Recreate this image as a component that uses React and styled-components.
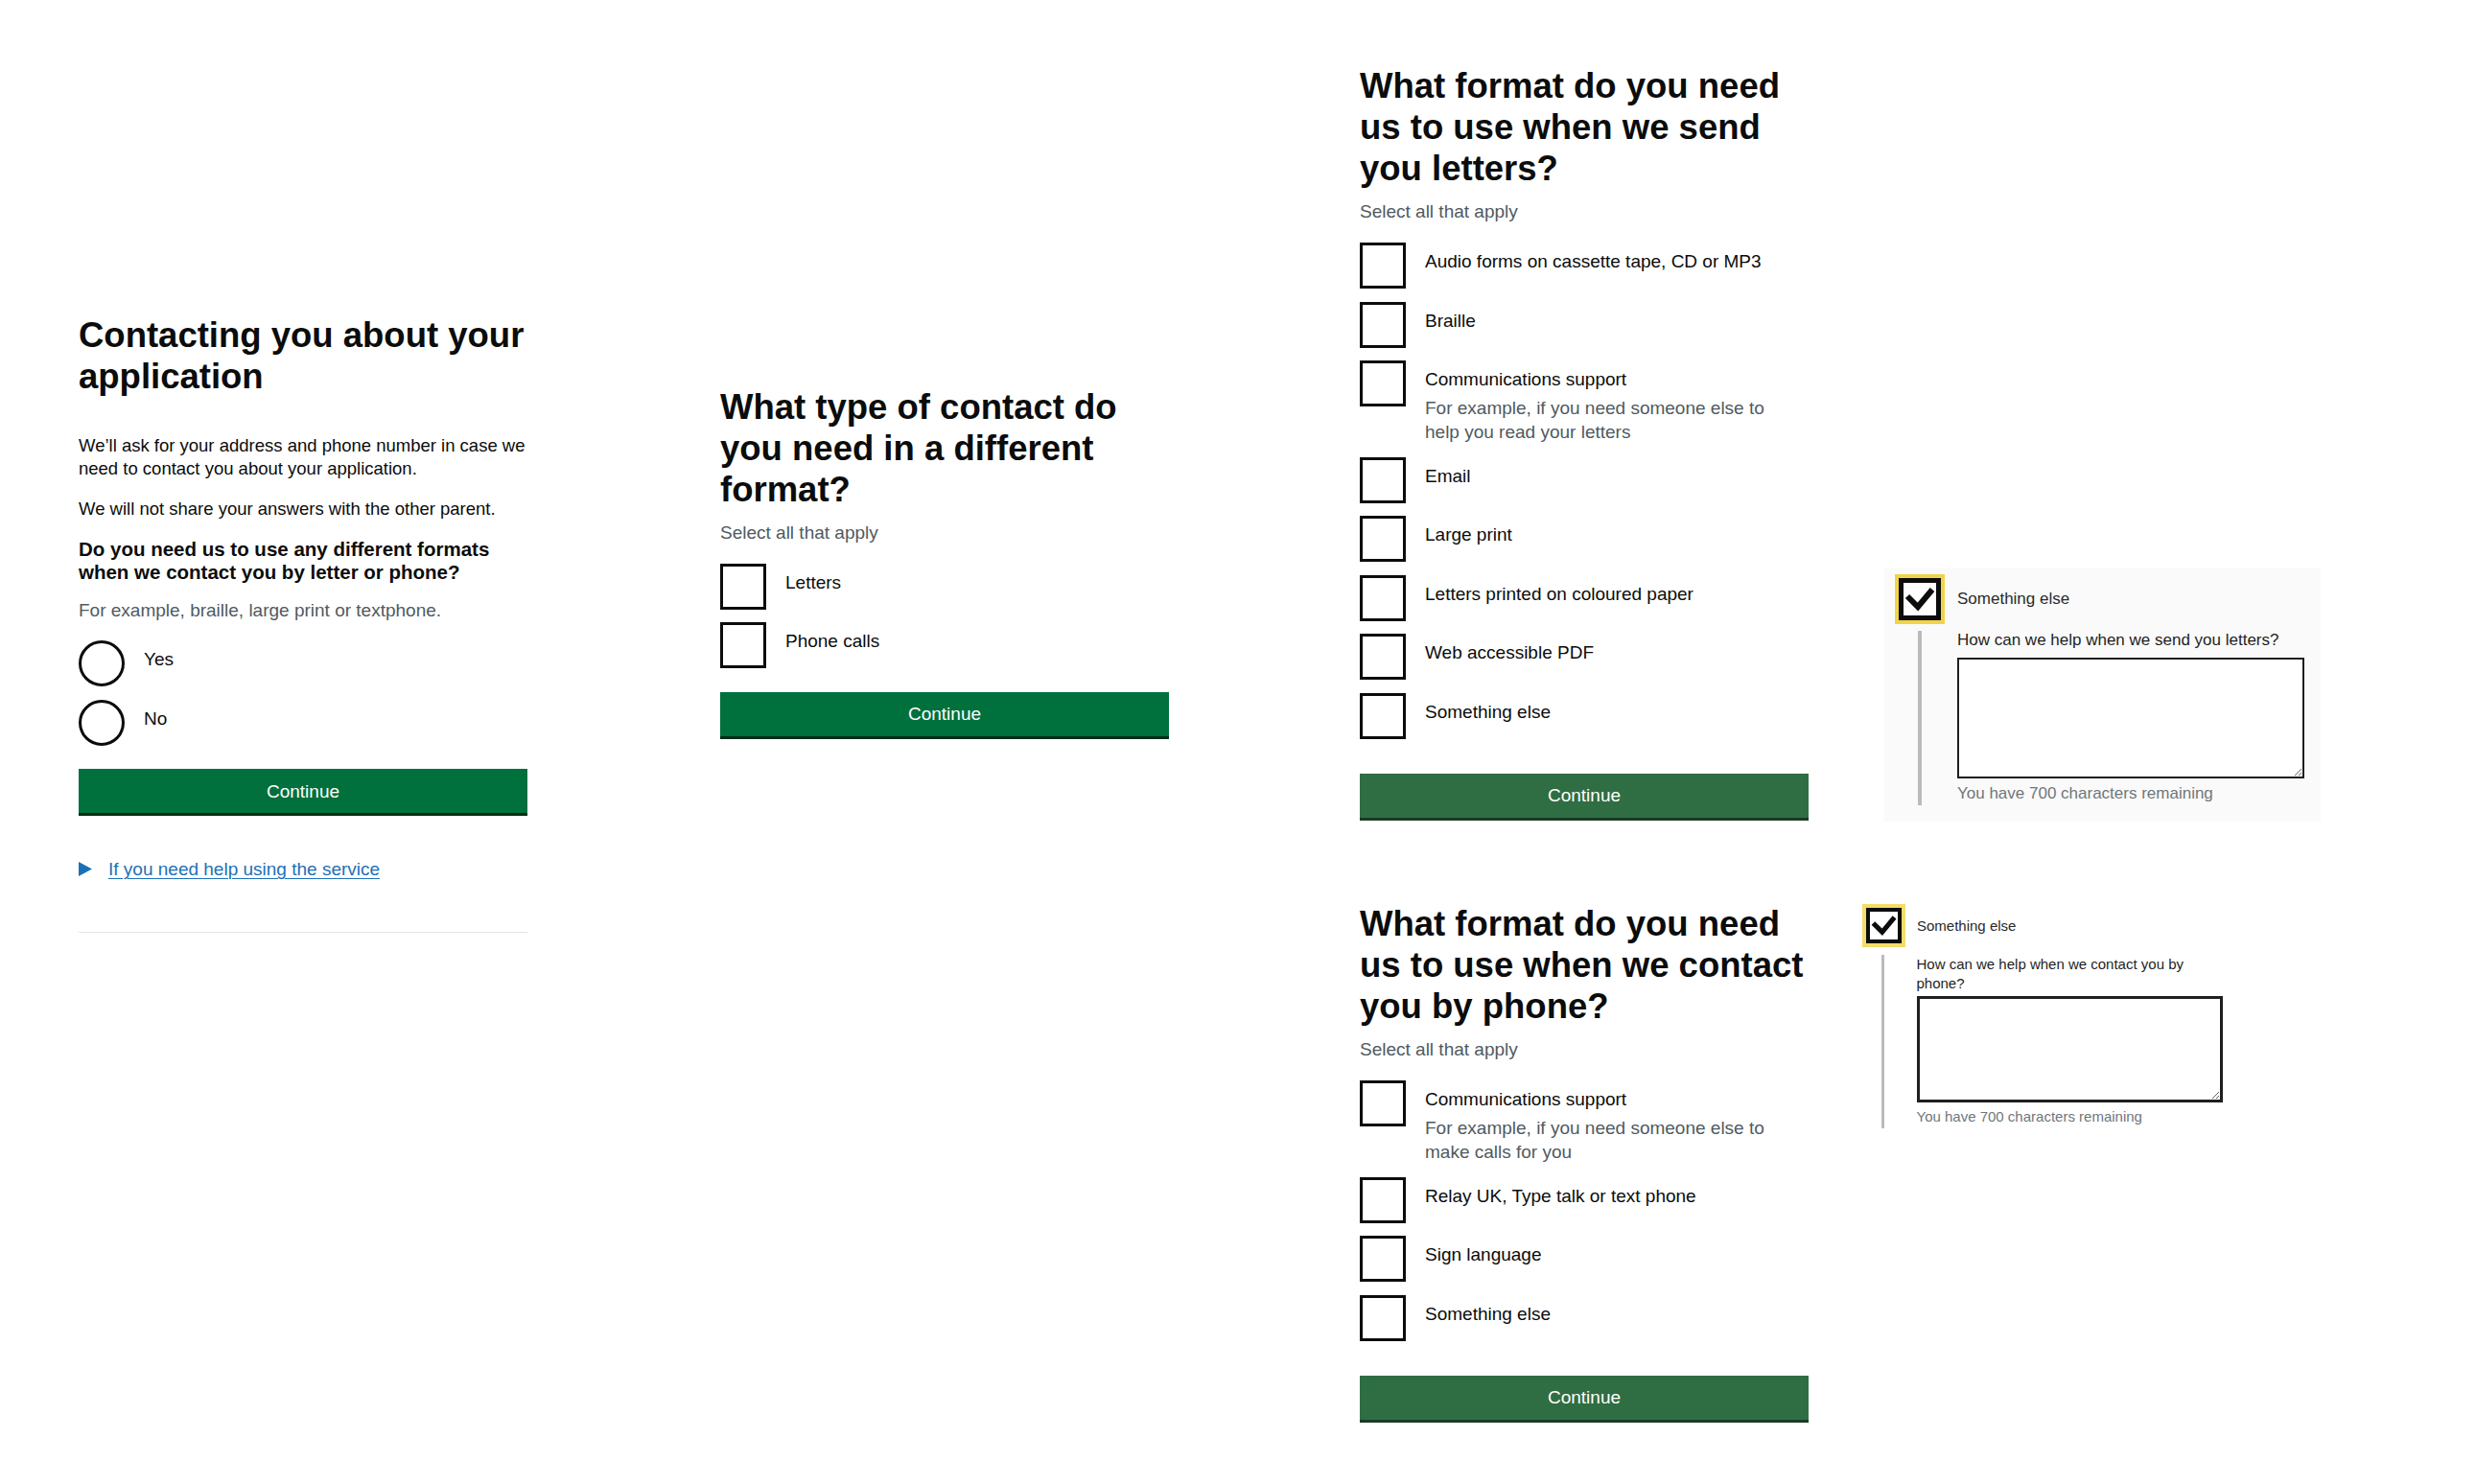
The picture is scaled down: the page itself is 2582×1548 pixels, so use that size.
import styled, { createGlobalStyle } from "styled-components";

const GlobalStyle = createGlobalStyle`
  * { box-sizing: border-box; }
  body {
    margin: 0;
    background: #fff;
    color: #0b0c0c;
    font-family: "Liberation Sans", Arial, sans-serif;
  }
`

const Page = styled.div`
  display: flex;
  align-items: flex-start;
  padding-left: 82px;
  min-height: 100vh;
`
const Column = styled.div`
  display: flex;
  flex-direction: column;
  margin-top: ${p => p.$top}px;
  margin-left: ${p => p.$left || 0}px;
`
const Row = styled.div`
  display: flex;
  align-items: flex-start;
  gap: ${p => p.$gap}px;
  margin-top: ${p => p.$top || 0}px;
`
const Panel = styled.div`
  width: 468px;
  display: flex;
  flex-direction: column;
`
const Heading = styled.h1`
  margin: 0;
  font-size: 36.5px;
  line-height: 43px;
  font-weight: 700;
  color: #0b0c0c;
`
const Body = styled.p`
  margin: ${p => p.$mt}px 0 0;
  font-size: 18.5px;
  line-height: 24px;
`
const Question = styled.h2`
  margin: 18px 0 0;
  font-size: 20.5px;
  line-height: 24px;
  font-weight: 700;
`
const Hint = styled.div`
  margin-top: ${p => p.$mt}px;
  font-size: 19px;
  line-height: 25px;
  color: #505a5f;
`
const Options = styled.div`
  margin-top: ${p => p.$mt}px;
  display: flex;
  flex-direction: column;
`
const Option = styled.div`
  display: grid;
  grid-template-columns: 48px 1fr;
  column-gap: 20px;
  margin-bottom: 13.5px;
`
const Box = styled.span`
  width: 48px;
  height: 48px;
  border: 3px solid #0b0c0c;
  border-radius: ${p => (p.$round ? "50%" : "0")};
  background: #fff;
`
const OptionText = styled.div`
  padding-top: 7px;
  font-size: 19px;
  line-height: 25px;
`
const OptionHint = styled.div`
  margin-top: 5px;
  max-width: 370px;
  color: #505a5f;
`
const Button = styled.button`
  margin-top: ${p => p.$mt}px;
  width: 100%;
  height: 46px;
  border: 0;
  border-radius: 0;
  background: ${p => (p.$muted ? "#2f6e42" : "#00703c")};
  box-shadow: 0 3px 0 ${p => (p.$muted ? "#1b3a25" : "#002d18")};
  color: #fff;
  font-family: inherit;
  font-size: 19px;
  line-height: 25px;
`
const Summary = styled.div`
  margin-top: 46px;
  display: flex;
  align-items: center;
  gap: 17px;
`
const SummaryLink = styled.a`
  font-size: 19px;
  line-height: 25px;
  color: #1d70b8;
  text-decoration: underline;
  text-decoration-thickness: 1px;
  text-underline-offset: 3px;
`
const Rule = styled.hr`
  margin: 53px 0 0;
  border: 0;
  border-top: 1px solid #e6e6e6;
`

const Excerpt = styled.div`
  width: ${p => p.$width}px;
  margin-top: ${p => p.$top}px;
  padding: ${p => p.$pad};
  background: ${p => p.$bg || "transparent"};
`
const TickRow = styled.div`
  display: flex;
  align-items: center;
  gap: ${p => p.$gap}px;
`
const TickBox = styled.span`
  display: flex;
  width: ${p => p.$size}px;
  height: ${p => p.$size}px;
  border: 4px solid ${p => p.$ring};
  flex: none;
`
const TickInner = styled.span`
  display: flex;
  flex: 1;
  border: ${p => p.$line}px solid #0b0c0c;
  background: #fff;
  svg { width: 100%; height: 100%; }
`
const TickLabel = styled.span`
  font-size: ${p => p.$size}px;
  line-height: 20px;
  color: #2a2a2a;
`
const Reveal = styled.div`
  margin: ${p => p.$mt}px 0 0 ${p => p.$ml}px;
  border-left: ${p => p.$bar}px solid #b9bbbd;
  padding: 0 0 2px ${p => p.$pl}px;
  font-size: ${p => p.$size}px;
  line-height: 20px;
`
const RevealLabel = styled.div`
  max-width: ${p => p.$width}px;
  color: #1f1f1f;
`
const TextArea = styled.textarea`
  display: block;
  margin-top: ${p => p.$mt}px;
  width: ${p => p.$width}px;
  height: ${p => p.$height}px;
  border: ${p => p.$line}px solid #1f1f1f;
  border-radius: 0;
  background: #fff;
  font-family: inherit;
`
const Counter = styled.div`
  margin-top: ${p => p.$mt}px;
  color: #6f777b;
`

function Tick() {
  return (
    <svg viewBox="0 0 34 34">
      <polyline points="4,14 15,25 30,7" fill="none" stroke="#0b0c0c" strokeWidth="6" />
    </svg>
  )
}

function Choices({ items, round, mt }) {
  return (
    <Options $mt={mt}>
      {items.map(item => (
        <Option key={item.label}>
          <Box $round={round} />
          <OptionText>
            {item.label}
            {item.hint && <OptionHint>{item.hint}</OptionHint>}
          </OptionText>
        </Option>
      ))}
    </Options>
  )
}

const letterFormats = [
  { label: "Audio forms on cassette tape, CD or MP3" },
  { label: "Braille" },
  { label: "Communications support", hint: "For example, if you need someone else to help you read your letters" },
  { label: "Email" },
  { label: "Large print" },
  { label: "Letters printed on coloured paper" },
  { label: "Web accessible PDF" },
  { label: "Something else" },
]

const phoneFormats = [
  { label: "Communications support", hint: "For example, if you need someone else to make calls for you" },
  { label: "Relay UK, Type talk or text phone" },
  { label: "Sign language" },
  { label: "Something else" },
]

export default function App() {
  return (
    <Page>
      <GlobalStyle />

      <Column $top={328}>
        <Panel>
          <Heading>Contacting you about your application</Heading>
          <Body $mt={39}>We’ll ask for your address and phone number in case we need to contact you about your application.</Body>
          <Body $mt={18}>We will not share your answers with the other parent.</Body>
          <Question>Do you need us to use any different formats when we contact you by letter or phone?</Question>
          <Hint $mt={15}>For example, braille, large print or textphone.</Hint>
          <Choices round mt={19} items={[{ label: "Yes" }, { label: "No" }]} />
          <Button $mt={11}>Continue</Button>
          <Summary>
            <svg width="14" height="15" viewBox="0 0 14 15">
              <polygon points="0,0 14,7.5 0,15" fill="#1d70b8" />
            </svg>
            <SummaryLink href="#">If you need help using the service</SummaryLink>
          </Summary>
          <Rule />
        </Panel>
      </Column>

      <Column $top={403} $left={201}>
        <Panel>
          <Heading>What type of contact do you need in a different format?</Heading>
          <Hint $mt={11}>Select all that apply</Hint>
          <Choices mt={19.5} items={[{ label: "Letters" }, { label: "Phone calls" }]} />
          <Button $mt={11}>Continue</Button>
        </Panel>
      </Column>

      <Column $top={68} $left={199}>
        <Row $gap={79}>
          <Panel>
            <Heading>What format do you need us to use when we send you letters?</Heading>
            <Hint $mt={11}>Select all that apply</Hint>
            <Choices mt={20} items={letterFormats} />
            <Button $muted $mt={22.5}>Continue</Button>
          </Panel>

          <Excerpt $width={455} $top={524} $pad="7px 0 17px 11px" $bg="#fafafa">
            <TickRow $gap={13}>
              <TickBox $size={52} $ring="#f1d34a">
                <TickInner $line={5}><Tick /></TickInner>
              </TickBox>
              <TickLabel $size={17}>Something else</TickLabel>
            </TickRow>
            <Reveal $mt={7} $ml={24} $bar={4} $pl={37} $size={17}>
              <RevealLabel $width={362}>How can we help when we send you letters?</RevealLabel>
              <TextArea $mt={8} $width={362} $height={126} $line={2} />
              <Counter $mt={6}>You have 700 characters remaining</Counter>
            </Reveal>
          </Excerpt>
        </Row>

        <Row $gap={56} $top={85}>
          <Panel>
            <Heading>What format do you need us to use when we contact you by phone?</Heading>
            <Hint $mt={11}>Select all that apply</Hint>
            <Choices mt={20} items={phoneFormats} />
            <Button $muted $mt={22.5}>Continue</Button>
          </Panel>

          <Excerpt $width={380} $top={1} $pad="0">
            <TickRow $gap={12}>
              <TickBox $size={45} $ring="#f5dc68">
                <TickInner $line={4}><Tick /></TickInner>
              </TickBox>
              <TickLabel $size={15}>Something else</TickLabel>
            </TickRow>
            <Reveal $mt={8} $ml={19.5} $bar={3.5} $pl={34} $size={15}>
              <RevealLabel $width={319}>How can we help when we contact you by phone?</RevealLabel>
              <TextArea $mt={3} $width={319} $height={111} $line={3} />
              <Counter $mt={5}>You have 700 characters remaining</Counter>
            </Reveal>
          </Excerpt>
        </Row>
      </Column>
    </Page>
  )
}
